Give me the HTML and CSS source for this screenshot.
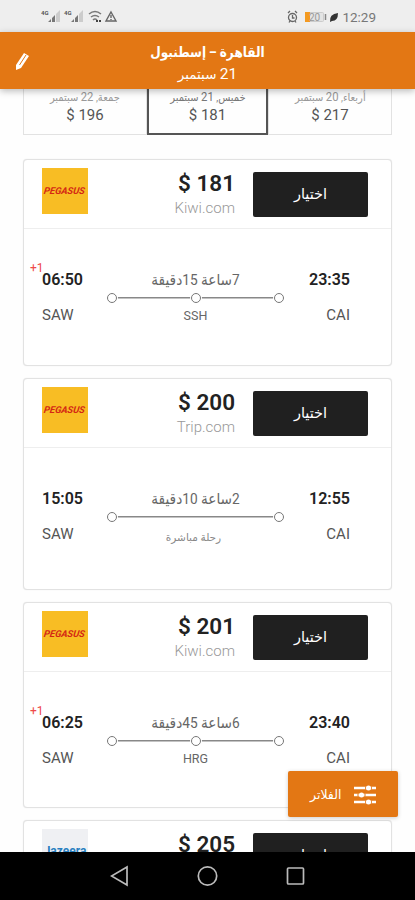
FILE: index.html
```
<!DOCTYPE html>
<html lang="ar">
<head>
<meta charset="utf-8">
<title>القاهرة – إسطنبول</title>
<link rel="stylesheet" href="styles.css">
</head>
<body>
<div class="screen">
  <div class="status">
    <svg class="signals" width="78" height="16" viewBox="0 0 78 16">
      <g fill="#777"><path d="M7 13l3-3v3zM11 13V9l3-3v7z"/><path d="M30 13l3-3v3zM34 13V9l3-3v7z"/></g>
      <g fill="#ccc"><path d="M15 13V5l4-4v12zM38 13V5l4-4v12z"/></g>
      <g fill="#555" font-family="Roboto" font-size="6" font-weight="700"><text x="0" y="6">4G</text><text x="23" y="6">4G</text></g>
      <path d="M48 5q6-5 12 0M50 8q4-3 8 0M52 11q2-2 4 0" fill="none" stroke="#777" stroke-width="1.5"/>
      <path d="M55 12h2M58 12h2" stroke="#444" stroke-width="2"/>
      <path d="M70 3l5 9H65zM70 6v3M70 10v1" fill="none" stroke="#666" stroke-width="1.4"/>
    </svg>
    <div class="status-right">
      <svg width="52" height="14" viewBox="0 0 52 14">
        <g fill="none" stroke="#666" stroke-width="1.3"><circle cx="5.5" cy="7.5" r="4"/><path d="M5.5 5v3h2M1 3l2-2M10 3L8 1M3 11l-1 1.5M8 11l1 1.5"/></g>
        <rect x="18.5" y="2.5" width="18" height="9" rx="1" fill="#e4e4e4" stroke="#ccc"/>
        <rect x="18" y="2" width="5" height="10" fill="#f39a20"/>
        <text x="22" y="10.5" font-family="Roboto" font-size="10" fill="#999">20</text>
        <path d="M38.500 4v6" stroke="#888" stroke-width="1.500"/>
        <path d="M43 12q-1-8 8-9q0 8-6 8z" fill="#333"/>
      </svg>
      <span>12:29</span>
    </div>
  </div>
  <header class="topbar">
    <svg class="pencil" width="16" height="22" viewBox="0 0 16 22"><path d="M1 20V15L9 3l5 3L6 18z" fill="#fff"/><path d="M4.500 15L11 5" stroke="#e37714" stroke-width="1"/></svg>
    <div class="title" dir="rtl">القاهرة – إسطنبول</div>
    <div class="subtitle" dir="rtl"><em>21</em> سبتمبر</div>
  </header>
  <div class="dates">
    <div class="date"><span dir="rtl">جمعة, <em>22</em> سبتمبر</span><b>$ 196</b></div>
    <div class="date current"><span dir="rtl">خميس, <em>21</em> سبتمبر</span><b>$ 181</b></div>
    <div class="date"><span dir="rtl">أربعاء, <em>20</em> سبتمبر</span><b>$ 217</b></div>
  </div>
  <main class="results">
    <article class="card">
      <div class="offer"><div class="logo"><span>PEGASUS</span></div><div class="price"><b>$ 181</b><span>Kiwi.com</span></div><div class="choose">اختيار</div></div>
      <div class="trip">
        <div class="end"><i>+1</i><b>06:50</b><span>SAW</span></div>
        <div class="route"><div class="duration" dir="rtl">7ساعة 15دقيقة</div><div class="line"><u></u><u></u><u></u></div><div class="via">SSH</div></div>
        <div class="end start"><b>23:35</b><span>CAI</span></div>
      </div>
    </article>
    <article class="card direct-card">
      <div class="offer"><div class="logo"><span>PEGASUS</span></div><div class="price"><b>$ 200</b><span>Trip.com</span></div><div class="choose">اختيار</div></div>
      <div class="trip">
        <div class="end"><b>15:05</b><span>SAW</span></div>
        <div class="route"><div class="duration" dir="rtl">2ساعة 10دقيقة</div><div class="line"><u></u><u></u></div><div class="via direct" dir="rtl">رحلة مباشرة</div></div>
        <div class="end start"><b>12:55</b><span>CAI</span></div>
      </div>
    </article>
    <article class="card third">
      <div class="offer"><div class="logo"><span>PEGASUS</span></div><div class="price"><b>$ 201</b><span>Kiwi.com</span></div><div class="choose">اختيار</div></div>
      <div class="trip">
        <div class="end"><i>+1</i><b>06:25</b><span>SAW</span></div>
        <div class="route"><div class="duration" dir="rtl">6ساعة 45دقيقة</div><div class="line"><u></u><u></u><u></u></div><div class="via">HRG</div></div>
        <div class="end start"><b>23:40</b><span>CAI</span></div>
      </div>
    </article>
    <article class="card">
      <div class="offer"><div class="logo jazeera">Jazeera</div><div class="price"><b>$ 205</b></div><div class="choose">اختيار</div></div>
    </article>
  </main>
  <div class="filters">
    <span>الفلاتر</span>
    <svg width="22" height="20" viewBox="0 0 22 20"><path d="M0 3h22M0 10h22M0 17h22" stroke="#fff" stroke-width="2.4"/><path d="M11.200 3h1M17.800 3h-1M3.500 10h1M10.500 10h1M11.200 17h1M17.800 17h-1" stroke="#e37714" stroke-width="3"/><g fill="#fff"><circle cx="14.500" cy="3" r="2.500"/><circle cx="7.500" cy="10" r="2.500"/><circle cx="14.500" cy="17" r="2.500"/></g></svg>
  </div>
  <nav class="nav">
    <svg width="196" height="24" viewBox="0 0 196 24" fill="none" stroke="#bbb" stroke-width="1.700"><path d="M17 3v18L1.500 12z"/><circle cx="97.500" cy="12" r="9.200"/><rect x="177.500" y="4" width="16" height="16" rx="1"/></svg>
  </nav>
</div>
</body>
</html>
```
FILE: styles.css
```
* { box-sizing: border-box; }
body { margin: 0; background: #fff; font-family: Roboto, "DejaVu Sans", sans-serif; }
em { font-style: normal; }
.screen { position: relative; display: flex; flex-direction: column; width: 415px; height: 900px; overflow: hidden; background: #fefefe; }
.status { flex: none; display: flex; justify-content: space-between; align-items: center; height: 32px; padding: 1px 39px 0 41px; background: #eee; }
.status-right { display: flex; align-items: center; gap: 3px; color: #777; font-size: 13.5px; }
.topbar { position: relative; z-index: 1; flex: none; height: 57px; padding-top: 9px; background: #e37714; color: #fff; text-align: center; box-shadow: 0 2px 7px rgba(0,0,0,.28); }
.pencil { position: absolute; left: 15px; top: 18px; }
.title { height: 22px; line-height: 22px; font-size: 14px; font-weight: 700; transform: scaleX(.865); }
.subtitle { height: 22px; line-height: 22px; font-size: 13.5px; }
.subtitle em { font-size: 15.5px; }
.dates { flex: none; display: grid; grid-template-columns: 124px 121px 124px; height: 46px; margin: 0 23px; }
.date { display: flex; flex-direction: column; align-items: center; border: 1px solid #e2e2e2; border-top: 0; color: #999; white-space: nowrap; }
.date span { height: 16px; line-height: 15px; font-size: 11px; transform: scaleX(.9); }
.date em { font-size: 12.5px; }
.date b { line-height: 20px; font-size: 15px; font-weight: 400; color: #555; }
.date.current { border: 2px solid #555; border-top: 0; color: #777; }
.results { flex: 1; min-height: 0; display: flex; flex-direction: column; gap: 12px; padding: 24px 23px 0; overflow: hidden; }
.card { flex: none; height: 207px; border: 1px solid #e2e2e2; border-radius: 4px; background: #fff; box-shadow: 0 0 1px #ddd; }
.card.direct-card { height: 212px; }
.card.third { height: 206px; }
.offer { display: flex; align-items: flex-start; height: 69px; padding: 8px 23px 0 18px; border-bottom: 1px solid #eee; }
.logo { display: flex; align-items: center; justify-content: center; width: 46px; height: 46px; background: #f8bd24; color: #d42714; font-size: 9.5px; font-weight: 700; font-style: italic; }
.logo span { transform: translateY(-1px) skewX(-8deg); }
.logo.jazeera { align-items: flex-start; padding-top: 15px; background: #eff0f3; color: #287fc0; font-size: 12px; font-weight: 700; font-style: normal; }
.price { flex: 1; padding-right: 18px; text-align: right; }
.price b { display: block; height: 30px; line-height: 31px; font-size: 22.5px; font-weight: 600; color: #222; }
.price span { display: block; line-height: 20px; font-size: 15px; font-weight: 300; color: #999; }
.choose { width: 115px; height: 45px; margin-top: 4px; line-height: 45px; border-radius: 2px; background: #202020; color: #fff; text-align: center; font-size: 14.5px; }
.trip { display: grid; grid-template-columns: 65px 177px 66px; padding: 41px 0 0 18px; }
.end { position: relative; display: flex; flex-direction: column; gap: 15px; line-height: 20px; color: #555; font-size: 15px; }
.end b { color: #222; font-weight: 600; font-size: 16px; }
.end i { position: absolute; left: -12px; top: -12px; color: #ee4a4a; font-size: 12px; font-style: normal; }
.start { text-align: right; }
.route { text-align: center; color: #666; }
.duration { height: 20px; line-height: 20px; font-size: 15px; white-space: nowrap; transform: scaleX(.91); }
.line { display: flex; justify-content: space-between; height: 14px; align-items: center; margin-top: 1px; background: linear-gradient(#888, #888) center / 160px 1.5px no-repeat; }
.line u { width: 10px; height: 10px; border: 1.5px solid #777; border-radius: 50%; background: #fff; box-shadow: 0 0 0 1px #fff; }
.via { line-height: 22px; font-size: 12.5px; }
.via.direct { padding: 3px 4px 0 0; font-size: 10.5px; color: #888; }
.filters { position: absolute; z-index: 2; left: 288px; top: 771px; display: flex; align-items: center; justify-content: space-between; width: 110px; height: 46px; padding: 1px 22px 0; border-radius: 2px; background: #e37714; color: #fff; font-size: 12.5px; box-shadow: 0 1px 4px rgba(0,0,0,.2); }
.nav { flex: none; display: flex; justify-content: center; align-items: center; height: 48px; background: #000; }
```
